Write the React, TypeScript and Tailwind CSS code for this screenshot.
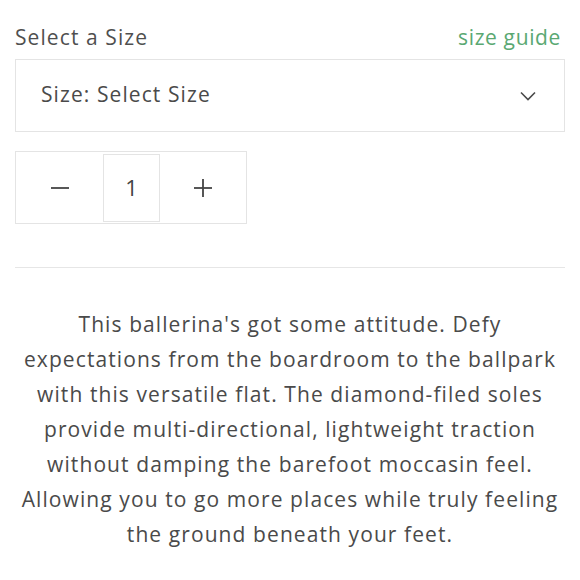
import { useState } from "react";

const font = { fontFamily: "'Open Sans', Lato, sans-serif" };

export default function App() {
  const [qty, setQty] = useState(1);

  return (
    <div className="w-[580px] h-[580px] bg-white px-[15px] text-[#4a4a4a] overflow-hidden tracking-[0.068em]" style={font}>
      <div className="pt-[23px] h-[51px] flex items-center justify-between text-[21px] leading-[28px]">
        <span className="text-[#4f4f4f]">Select a Size</span>
        <a href="#" className="text-[#5aa872] tracking-[0.03em] mr-[4px]">size guide</a>
      </div>

      <button className="mt-[8px] w-full h-[73px] border border-[#e4e4e4] flex items-center justify-between pl-[25px] pr-[28px] text-[21px] text-[#4a4a4a]">
        <span className="-mt-[2px]">Size: Select Size</span>
        <svg width="16" height="10" viewBox="0 0 16 10" fill="none" stroke="#4a4a4a" strokeWidth="1.6">
          <polyline points="1,1.5 8,8.5 15,1.5" />
        </svg>
      </button>

      <div className="mt-[19px] w-[232px] h-[73px] border border-[#e4e4e4] flex items-center">
        <button
          className="w-[87px] h-full flex items-center justify-center"
          onClick={() => setQty(Math.max(1, qty - 1))}
        >
          <svg width="20" height="20" viewBox="0 0 20 20" stroke="#444" strokeWidth="1.8">
            <line x1="1" y1="10" x2="19" y2="10" />
          </svg>
        </button>
        <div className="w-[57px] h-[68px] border border-[#e4e4e4] flex items-center justify-center text-[22px] text-[#444] tracking-normal">
          {qty}
        </div>
        <button
          className="flex-1 h-full flex items-center justify-center"
          onClick={() => setQty(qty + 1)}
        >
          <svg width="20" height="20" viewBox="0 0 20 20" stroke="#444" strokeWidth="1.8">
            <line x1="1" y1="10" x2="19" y2="10" />
            <line x1="10" y1="1" x2="10" y2="19" />
          </svg>
        </button>
      </div>

      <div className="mt-[43px] border-t border-[#e6e6e6]" />

      <p className="mt-[39px] text-center text-[21px] leading-[35px] text-[#4a4a4a]">
        This ballerina's got some attitude. Defy
        <br />
        expectations from the boardroom to the ballpark
        <br />
        with this versatile flat. The diamond-filed soles
        <br />
        provide multi-directional, lightweight traction
        <br />
        without damping the barefoot moccasin feel.
        <br />
        Allowing you to go more places while truly feeling
        <br />
        the ground beneath your feet.
      </p>
    </div>
  );
}
